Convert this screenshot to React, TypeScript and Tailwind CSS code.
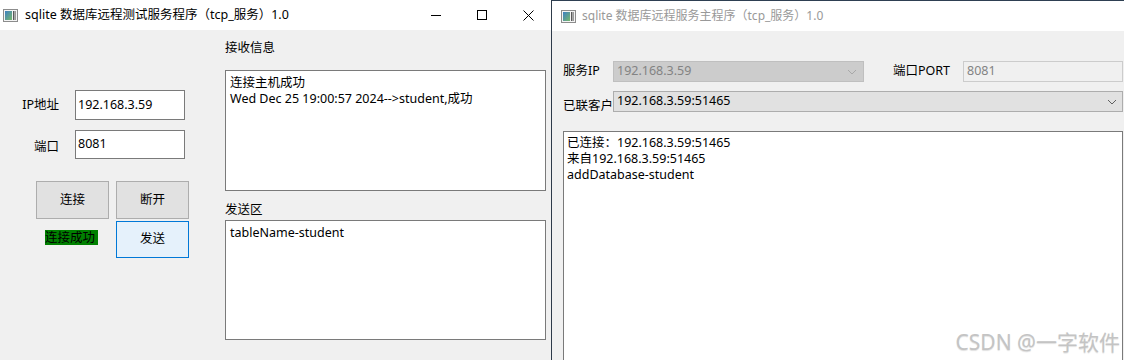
import React from 'react';

const FONT = "font-['Noto_Sans','Noto_Sans_CJK_SC',sans-serif]";

function AppIcon() {
    return (
        <svg width="15" height="13" viewBox="0 0 15 13" className="shrink-0">
            <defs>
                <linearGradient id="ico" x1="0" y1="0" x2="1" y2="1">
                    <stop offset="0" stopColor="#3d7fc4" />
                    <stop offset="1" stopColor="#77b86a" />
                </linearGradient>
            </defs>
            <rect x="0.5" y="0.5" width="14" height="12" fill="#f4f4f4" stroke="#8c8c8c" />
            <rect x="2" y="2" width="7" height="9" fill="url(#ico)" />
            <rect x="10" y="2" width="1.5" height="9" fill="#5a5a5a" />
            <rect x="12" y="2" width="1" height="9" fill="#9a9a9a" />
        </svg>
    );
}

function Chevron({ color }: { color: string }) {
    return (
        <svg width="10" height="6" viewBox="0 0 10 6" className="shrink-0">
            <polyline points="1,1 5,5 9,1" fill="none" stroke={color} strokeWidth="1" />
        </svg>
    );
}

function TitleButtons() {
    return (
        <div className="ml-auto flex h-full">
            <div className="flex w-[46px] items-center justify-center">
                <div className="h-px w-[10px] bg-black" />
            </div>
            <div className="flex w-[46px] items-center justify-center">
                <div className="h-[10px] w-[10px] border border-black" />
            </div>
            <div className="flex w-[46px] items-center justify-center">
                <svg width="11" height="11" viewBox="0 0 11 11">
                    <path d="M0.5 0.5 L10.5 10.5 M10.5 0.5 L0.5 10.5" stroke="#000" strokeWidth="1" />
                </svg>
            </div>
        </div>
    );
}

function ClientWindow() {
    return (
        <div className="flex h-[360px] w-[551px] shrink-0 flex-col bg-[#f0f0f0]">
            {/* Title bar */}
            <div className="flex h-[30px] shrink-0 items-center bg-white pl-[3px]">
                <AppIcon />
                <span className="ml-[7px] text-[12.5px] text-black">sqlite 数据库远程测试服务程序（tcp_服务）1.0</span>
                <TitleButtons />
            </div>

            <div className="flex flex-1">
                {/* Left controls */}
                <div className="w-[225px] shrink-0 pt-[60px]">
                    <div className="flex h-[30px] items-center">
                        <span className="w-[59px] text-right">IP地址</span>
                        <div className="ml-[16px] flex h-[30px] w-[110px] items-center border border-[#7a7a7a] bg-white pl-[2px]">
                            192.168.3.59
                        </div>
                    </div>
                    <div className="mt-[10px] flex h-[29px] items-center">
                        <span className="mt-[6px] w-[59px] text-right">端口</span>
                        <div className="ml-[16px] flex h-[29px] w-[110px] items-center border border-[#7a7a7a] bg-white pl-[2px]">
                            8081
                        </div>
                    </div>
                    <div className="mt-[22px] flex gap-[7px] pl-[36px]">
                        <button className="flex h-[38px] w-[73px] items-center justify-center border border-[#adadad] bg-[#e1e1e1]">
                            连接
                        </button>
                        <button className="flex h-[38px] w-[73px] items-center justify-center border border-[#adadad] bg-[#e1e1e1]">
                            断开
                        </button>
                    </div>
                    <div className="mt-[2px] flex">
                        <div className="w-[116px] pl-[45px] pt-[9px]">
                            <span className="inline-block h-[15px] w-[53px] overflow-hidden whitespace-nowrap bg-[#008000] leading-[15px]">连接成功</span>
                        </div>
                        <button className="flex h-[37px] w-[73px] items-center justify-center border border-[#0078d7] bg-[#e5f1fb]">
                            发送
                        </button>
                    </div>
                </div>

                {/* Right text areas */}
                <div className="flex w-[321px] flex-col pt-[10px]">
                    <div className="leading-[16px]">接收信息</div>
                    <div className="mt-[14px] h-[121px] border border-[#7a7a7a] bg-white px-[4px] pt-[4px] leading-[16px]">
                        <div>连接主机成功</div>
                        <div>Wed Dec 25 19:00:57 2024--&gt;student,成功</div>
                    </div>
                    <div className="mt-[11px] leading-[16px]">发送区</div>
                    <div className="mt-[2px] h-[120px] border border-[#7a7a7a] bg-white px-[4px] pt-[4px] leading-[16px]">
                        tableName-student
                    </div>
                </div>
            </div>
        </div>
    );
}

function ServerWindow() {
    return (
        <div className="relative flex h-[360px] flex-1 flex-col overflow-hidden border-t border-[#2e3f52] bg-[#f0f0f0]">
            {/* Title bar */}
            <div className="flex h-[30px] shrink-0 items-center bg-white pl-[9px]">
                <AppIcon />
                <span className="ml-[6px] text-[12px] text-[#999999]">sqlite 数据库远程服务主程序（tcp_服务）1.0</span>
            </div>

            <div className="flex flex-1 flex-col pl-[11px] pr-[1px] pt-[30px]">
                <div className="flex h-[21px] items-center">
                    <span className="w-[50px]">服务IP</span>
                    <div className="flex h-[21px] w-[251px] items-center justify-between border border-[#bfbfbf] bg-[#cccccc] pl-[3px] pr-[6px] text-[#838383]">
                        <span>192.168.3.59</span>
                        <Chevron color="#a8a8a8" />
                    </div>
                    <span className="ml-[29px] w-[70px]">端口PORT</span>
                    <div className="flex h-[21px] flex-1 items-center border border-[#cccccc] bg-[#f0f0f0] pl-[3px] text-[#838383]">
                        8081
                    </div>
                </div>
                <div className="mt-[9px] flex h-[21px] items-start">
                    <span className="mt-[7px] w-[50px] whitespace-nowrap leading-[16px]">已联客户</span>
                    <div className="flex h-[21px] flex-1 items-center justify-between border border-[#adadad] bg-[#e1e1e1] pl-[3px] pr-[5px]">
                        <span>192.168.3.59:51465</span>
                        <Chevron color="#606060" />
                    </div>
                </div>
                <div className="mt-[19px] h-[260px] shrink-0 border border-[#7a7a7a] bg-white pl-[3px] pt-[3px] leading-[16px]">
                    <div>已连接：192.168.3.59:51465</div>
                    <div>来自192.168.3.59:51465</div>
                    <div>addDatabase-student</div>
                </div>
            </div>

            {/* CSDN watermark */}
            <div className="absolute bottom-[6px] right-[4px] text-[21px] leading-[24px] text-[#c4c4c4] [text-shadow:0_1px_1px_rgba(0,0,0,0.12)]">
                CSDN @一字软件
            </div>
        </div>
    );
}

export default function App() {
    return (
        <div className={`flex h-[360px] w-[1124px] overflow-hidden bg-[#f0f0f0] text-[12.5px] text-black ${FONT}`}>
            <ClientWindow />
            <div className="w-px shrink-0 bg-[#2e3b4a]" />
            <ServerWindow />
        </div>
    );
}
